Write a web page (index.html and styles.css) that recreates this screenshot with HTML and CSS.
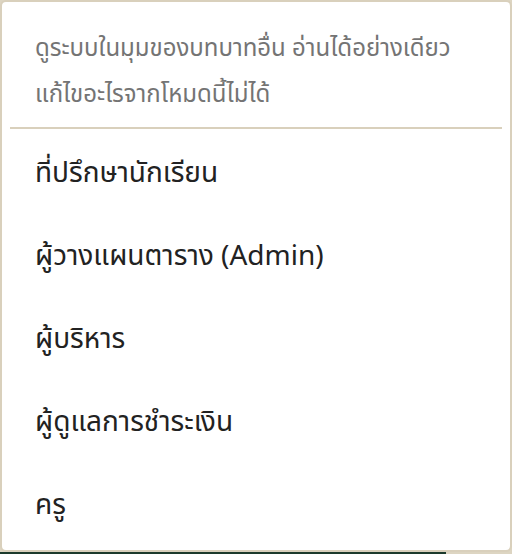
FILE: index.html
```html
<!DOCTYPE html>
<html lang="th">
<head>
  <meta charset="UTF-8" />
  <meta name="viewport" content="width=device-width, initial-scale=1.0"/>
  <title>เลือกบทบาท</title>
  <link rel="stylesheet" href="styles.css">
</head>
<body>
  <div class="panel">
    <div class="note">
      ดูระบบในมุมของบทบาทอื่น อ่านได้อย่างเดียว<br/>
      แก้ไขอะไรจากโหมดนี้ไม่ได้
    </div>
    <div class="divider"></div>
    <ul class="roles">
      <li>ที่ปรึกษานักเรียน</li>
      <li>ผู้วางแผนตาราง (Admin)</li>
      <li>ผู้บริหาร</li>
      <li>ผู้ดูแลการชำระเงิน</li>
      <li>ครู</li>
    </ul>
  </div>
  <div class="below"></div>
</body>
</html>
```

FILE: styles.css
```css
body {
  margin: 0;
  background: #ddd5c2;
  font-family: "Noto Sans Thai", "Noto Sans", sans-serif;
}
.panel {
  background: #fff;
  border: 2px solid #d9d0bc;
  border-radius: 6px;
  height: 548px;
}
.note {
  padding: 24px 33px 0;
  font-size: 24px;
  line-height: 46px;
  color: #747474;
}
.divider {
  margin: 9px 8px 0;
  height: 2px;
  background: #d9d0bc;
}
.roles {
  list-style: none;
  margin: 0;
  padding: 3px 0 0;
}
.roles li {
  height: 83px;
  line-height: 83px;
  padding-left: 33px;
  font-size: 28px;
  color: #222;
  cursor: pointer;
}
.below {
  width: 446px;
  height: 2px;
  background: #1c3a2c;
}
```
